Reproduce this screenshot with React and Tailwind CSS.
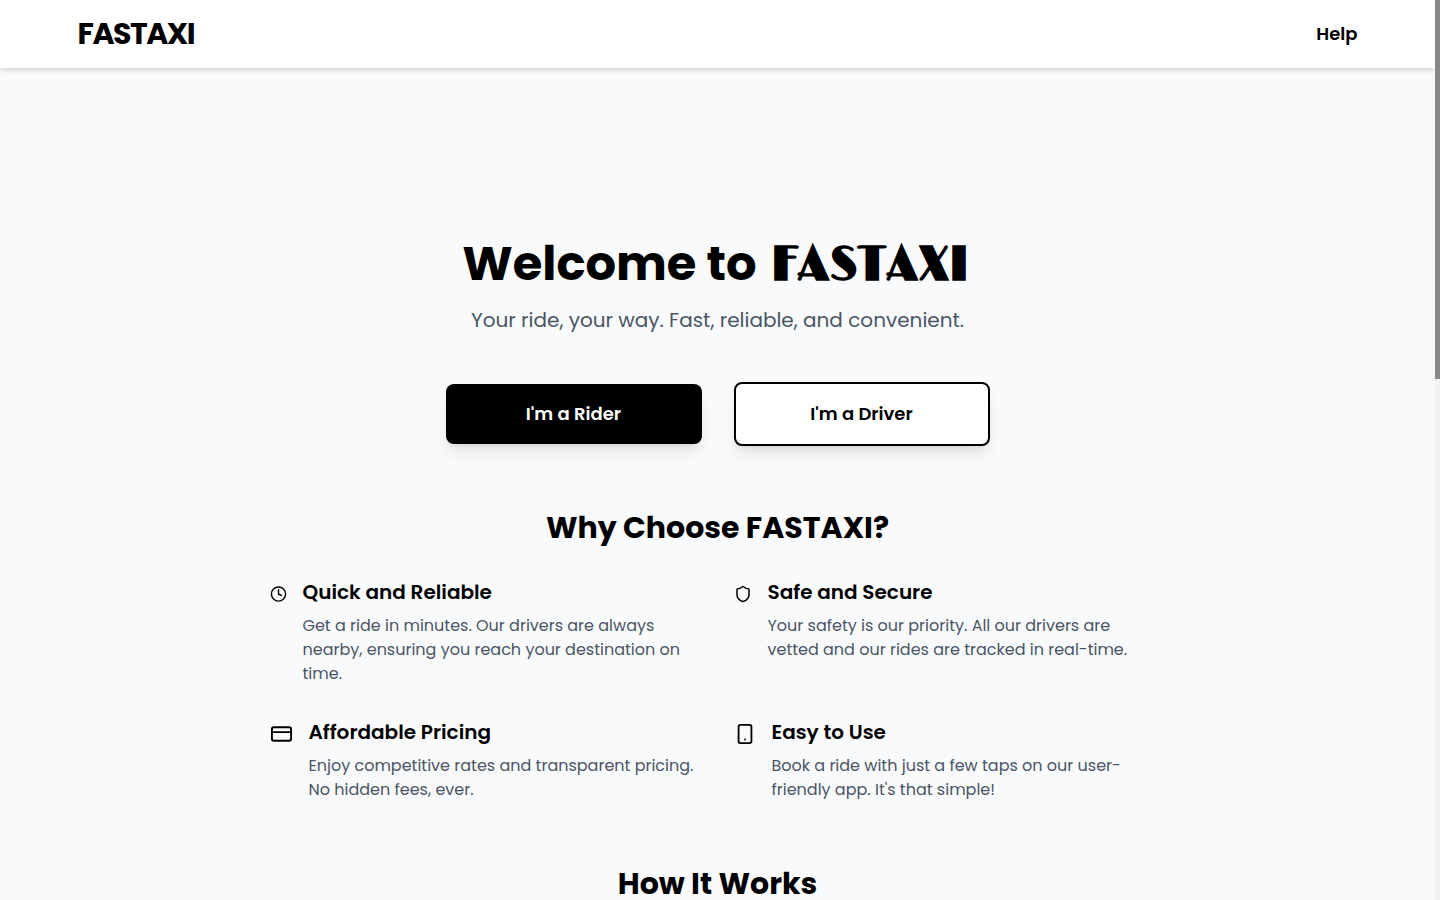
import { Clock, CreditCard, Shield, Smartphone } from "lucide-react";

const features = [
  {
    icon: Clock,
    size: "w-[17px]",
    title: "Quick and Reliable",
    text: "Get a ride in minutes. Our drivers are always nearby, ensuring you reach your destination on time.",
  },
  {
    icon: Shield,
    size: "w-[18px]",
    title: "Safe and Secure",
    text: "Your safety is our priority. All our drivers are vetted and our rides are tracked in real-time.",
  },
  {
    icon: CreditCard,
    size: "w-[23px]",
    title: "Affordable Pricing",
    text: "Enjoy competitive rates and transparent pricing. No hidden fees, ever.",
  },
  {
    icon: Smartphone,
    size: "w-[22px]",
    title: "Easy to Use",
    text: "Book a ride with just a few taps on our user-friendly app. It's that simple!",
  },
];

function Header() {
  return (
    <header className="relative bg-white shadow-md">
      <div className="mx-auto flex h-[68px] max-w-7xl items-center justify-between">
        <a href="#home" className="text-3xl font-bold tracking-tighter">
          FASTAXI
        </a>
        <a href="#help" className="text-lg font-semibold">
          Help
        </a>
      </div>
    </header>
  );
}

function Feature({ icon: Icon, size, title, text }) {
  return (
    <li className="flex items-start gap-4">
      <Icon className={`mt-1 h-6 shrink-0 ${size}`} aria-hidden="true" />
      <div>
        <h3 className="mb-2 text-xl font-semibold">{title}</h3>
        <p className="text-base text-gray-600">{text}</p>
      </div>
    </li>
  );
}

export default function App() {
  return (
    <div className="flex h-screen bg-gray-50 font-['Poppins','Inter',sans-serif] text-black">
      <div className="min-w-0 flex-1 overflow-hidden">
        <Header />
        <main className="mx-auto max-w-4xl pt-42">
          <section className="text-center">
            <h1 className="mb-3 text-5xl leading-[56px] font-bold">
              Welcome to{" "}
              <span className="mx-1 font-['Limelight','Broadway','Lato',sans-serif]">FASTAXI</span>
            </h1>
            <p className="mb-12 text-xl text-gray-600">
              Your ride, your way. Fast, reliable, and convenient.
            </p>
            <div className="mb-16 flex items-center justify-center gap-8">
              <button className="w-64 rounded-lg bg-black py-4 text-lg font-semibold text-white shadow-lg">
                I'm a Rider
              </button>
              <button className="w-64 rounded-lg border-2 border-black bg-white py-4 text-lg font-semibold shadow-lg">
                I'm a Driver
              </button>
            </div>
          </section>
          <section className="mb-16">
            <h2 className="mb-8 text-center text-3xl font-bold">Why Choose FASTAXI?</h2>
            <ul className="grid grid-cols-2 gap-8">
              {features.map((feature) => (
                <Feature key={feature.title} {...feature} />
              ))}
            </ul>
          </section>
          <section>
            <h2 className="text-center text-3xl font-bold">How It Works</h2>
          </section>
        </main>
      </div>
      <div className="w-[5px] bg-[#f1f1f1]" aria-hidden="true">
        <div className="h-[379px] bg-[#888888]" />
      </div>
    </div>
  );
}
